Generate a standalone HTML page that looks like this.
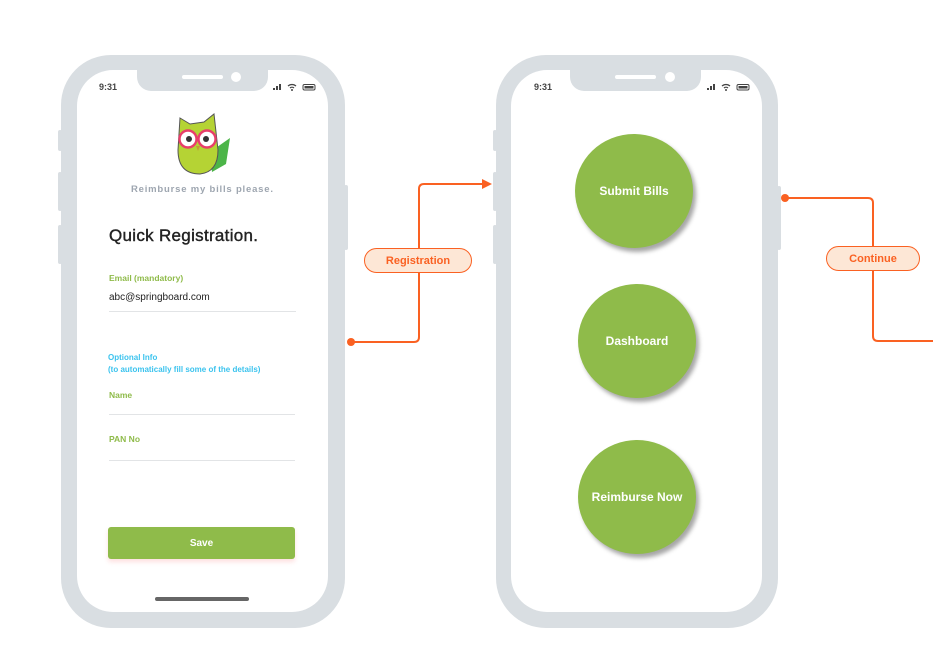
<!DOCTYPE html>
<html><head><meta charset="utf-8"><style>
body{margin:0;width:933px;height:652px;background:#fff;position:relative;overflow:hidden;font-family:"Liberation Sans",sans-serif}
.a{position:absolute}
.phone{position:absolute;background:#d9dee2;border-radius:50px}
.scr{position:absolute;background:#fff;border-radius:36px}
.notch{position:absolute;background:#d9dee2;border-radius:0 0 14px 14px}
.btn{position:absolute;background:#d9dee2;border-radius:2px}
.st{position:absolute;font-size:9px;font-weight:bold;color:#444}
.circ{position:absolute;width:118px;height:114px;border-radius:50%;background:#8fbb4a;box-shadow:3px 4px 4px rgba(0,0,0,.35);color:#fff;font-weight:bold;font-size:12px;display:flex;align-items:center;justify-content:center}
.lbl{position:absolute;color:#8fbb4a;font-weight:bold;font-size:8.5px}
.line{position:absolute;height:1px;background:#e2e4e6}
.pill{position:absolute;border:1.5px solid #fa6122;background:#fde7d6;border-radius:13px;color:#fa6122;font-weight:bold;font-size:11px;display:flex;align-items:center;justify-content:center;box-sizing:border-box}
</style></head><body>
<!-- phone 1 -->
<div class="btn" style="left:58px;top:130px;width:4px;height:21px"></div>
<div class="btn" style="left:58px;top:172px;width:4px;height:39px"></div>
<div class="btn" style="left:58px;top:225px;width:4px;height:39px"></div>
<div class="btn" style="left:344px;top:185px;width:4px;height:65px"></div>
<div class="phone" style="left:61px;top:55px;width:284px;height:573px"></div>
<div class="scr" style="left:77px;top:70px;width:251px;height:542px"></div>
<div class="notch" style="left:137px;top:70px;width:131px;height:21px"></div>
<div class="a" style="left:182px;top:75px;width:41px;height:4px;background:#fff;border-radius:2px"></div>
<div class="a" style="left:231px;top:72px;width:10px;height:10px;background:#fff;border-radius:50%"></div>
<div class="st" style="left:99px;top:82px">9:31</div>
<svg class="a" style="left:272px;top:82px" width="46" height="10"><rect x="1" y="6" width="2" height="2" fill="#444"/><rect x="4" y="4" width="2" height="4" fill="#444"/><rect x="7" y="2" width="2" height="6" fill="#444"/><path d="M16 4a6 6 0 0 1 8 0M18 6a3 3 0 0 1 4 0" stroke="#444" fill="none" stroke-width="1.3"/><circle cx="20" cy="8" r="1" fill="#444"/><rect x="31" y="2.5" width="12" height="5.5" rx="1.5" fill="none" stroke="#444"/><rect x="32.5" y="4" width="9" height="2.5" fill="#444"/></svg>
<svg class="a" style="left:172px;top:110px" width="62" height="70">
<path d="M38 42 L58 28 L54 54 L40 62Z" fill="#4cb548"/>
<path d="M8 8 L18 14 L32 12 L42 4 L46 40 Q46 62 28 64 Q6 64 6 40 Z" fill="#b5d334" stroke="#555" stroke-width="1"/>
<circle cx="16" cy="29" r="8.5" fill="#fff" stroke="#e83e6a" stroke-width="2.4"/><circle cx="35" cy="29" r="8.5" fill="#fff" stroke="#e83e6a" stroke-width="2.4"/>
<circle cx="17" cy="29" r="3" fill="#333"/><circle cx="34" cy="29" r="3" fill="#333"/>
<path d="M24 36 L28 36 L26 41Z" fill="#c79a3a"/></svg>
<div class="a" style="left:131px;top:184px;font-size:9.5px;font-weight:bold;color:#9ea6b0;letter-spacing:.8px">Reimburse my bills please.</div>
<div class="a" style="left:109px;top:226px;font-size:17px;color:#222;letter-spacing:.3px;-webkit-text-stroke:.4px #222">Quick Registration.</div>
<div class="lbl" style="left:109px;top:273px">Email (mandatory)</div>
<div class="a" style="left:109px;top:292px;font-size:10px;color:#222">abc@springboard.com</div>
<div class="line" style="left:109px;top:311px;width:187px"></div>
<div class="a" style="left:108px;top:352px;font-size:8px;font-weight:bold;color:#3bc3ee;line-height:12px">Optional Info<br>(to automatically fill some of the details)</div>
<div class="lbl" style="left:109px;top:390px">Name</div>
<div class="line" style="left:109px;top:414px;width:186px"></div>
<div class="lbl" style="left:109px;top:434px">PAN No</div>
<div class="line" style="left:109px;top:460px;width:186px"></div>
<div class="a" style="left:108px;top:527px;width:187px;height:32px;background:#8fbb4a;border-radius:3px;box-shadow:0 3px 5px rgba(250,100,100,.2);color:#fff;font-weight:bold;font-size:10px;display:flex;align-items:center;justify-content:center">Save</div>
<div class="a" style="left:155px;top:597px;width:94px;height:4px;background:#666;border-radius:2px"></div>
<!-- phone 2 -->
<div class="btn" style="left:493px;top:130px;width:4px;height:21px"></div>
<div class="btn" style="left:493px;top:172px;width:4px;height:39px"></div>
<div class="btn" style="left:493px;top:225px;width:4px;height:39px"></div>
<div class="btn" style="left:777px;top:186px;width:4px;height:64px"></div>
<div class="phone" style="left:496px;top:55px;width:282px;height:573px"></div>
<div class="scr" style="left:511px;top:70px;width:251px;height:542px"></div>
<div class="notch" style="left:570px;top:70px;width:131px;height:21px"></div>
<div class="a" style="left:615px;top:75px;width:41px;height:4px;background:#fff;border-radius:2px"></div>
<div class="a" style="left:665px;top:72px;width:10px;height:10px;background:#fff;border-radius:50%"></div>
<div class="st" style="left:534px;top:82px">9:31</div>
<svg class="a" style="left:706px;top:82px" width="46" height="10"><rect x="1" y="6" width="2" height="2" fill="#444"/><rect x="4" y="4" width="2" height="4" fill="#444"/><rect x="7" y="2" width="2" height="6" fill="#444"/><path d="M16 4a6 6 0 0 1 8 0M18 6a3 3 0 0 1 4 0" stroke="#444" fill="none" stroke-width="1.3"/><circle cx="20" cy="8" r="1" fill="#444"/><rect x="31" y="2.5" width="12" height="5.5" rx="1.5" fill="none" stroke="#444"/><rect x="32.5" y="4" width="9" height="2.5" fill="#444"/></svg>
<div class="circ" style="left:575px;top:134px">Submit Bills</div>
<div class="circ" style="left:578px;top:284px">Dashboard</div>
<div class="circ" style="left:578px;top:440px">Reimburse Now</div>
<!-- connectors -->
<svg class="a" style="left:0;top:0" width="933" height="652">
<circle cx="351" cy="342" r="4" fill="#fa6122"/>
<path d="M351 342 H414 Q419 342 419 337 V189 Q419 184 424 184 H484" stroke="#fa6122" stroke-width="2" fill="none"/>
<path d="M482 179 L492 184 L482 189Z" fill="#fa6122"/>
<circle cx="785" cy="198" r="4" fill="#fa6122"/>
<path d="M785 198 H868 Q873 198 873 203 V336 Q873 341 878 341 H933" stroke="#fa6122" stroke-width="2" fill="none"/>
</svg>
<div class="pill" style="left:364px;top:248px;width:108px;height:25px">Registration</div>
<div class="pill" style="left:826px;top:246px;width:94px;height:25px">Continue</div>
</body></html>
